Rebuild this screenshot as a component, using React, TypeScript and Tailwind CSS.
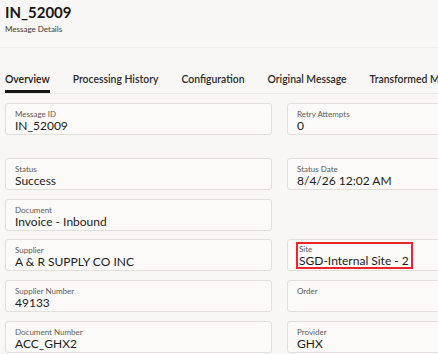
import React from "react";

type Field = { label: string; value?: string; highlight?: boolean };

function Card({ label, value, highlight }: Field) {
  return (
    <div className="h-[32px] rounded-[3px] border border-[#e2dfda] bg-[#fbfaf8] pl-[9px] pt-[5px]">
      <div className={highlight ? "inline-block -ml-[1px] -mt-[3px] border-2 border-[#e8262b] pl-[1px] pr-[2px]" : ""}>
        <div className="text-[8px] leading-[10px] text-[#5e5a55]">{label}</div>
        <div className="text-[12px] leading-[13px] text-[#1e1c1a]">{value ?? "\u00a0"}</div>
      </div>
    </div>
  );
}

const tabs = ["Overview", "Processing History", "Configuration", "Original Message", "Transformed Message"];

export default function App() {
  return (
    <div
      className="w-[438px] h-[354px] overflow-hidden bg-[#f8f7f5]"
      style={{ fontFamily: "Lato, 'Open Sans', sans-serif" }}
    >
      {/* header */}
      <div className="h-[48px] border-b border-[#efede9] px-[5px] pt-[3px]">
        <div className="text-[15px] font-bold leading-[18px] text-[#161513]">IN_52009</div>
        <div className="mt-[3px] text-[8px] leading-[10px] text-[#3a3835]">Message Details</div>
      </div>

      {/* tabs */}
      <div className="mt-[22px] flex h-[24px] gap-[23px] border-b border-[#ebe9e5] pl-[5px] pt-[2px] whitespace-nowrap">
        {tabs.map((t, i) => (
          <div
            key={t}
            className={
              "text-[10.4px] leading-[14px] font-semibold text-[#2b2927] " +
              (i === 0 ? "border-b-[3px] border-[#161513] text-[#161513] font-bold" : "")
            }
          >
            {t}
          </div>
        ))}
      </div>

      {/* fields */}
      <div className="mt-[9px] grid w-[560px] grid-cols-[267px_267px] gap-x-[15px] pl-[5px]">
        <Card label="Message ID" value="IN_52009" />
        <Card label="Retry Attempts" value="0" />
        <div className="col-span-2 h-[23px]" />
        <Card label="Status" value="Success" />
        <Card label="Status Date" value="8/4/26 12:02 AM" />
        <div className="col-span-2 h-[9px]" />
        <Card label="Document" value="Invoice - Inbound" />
        <div />
        <div className="col-span-2 h-[8px]" />
        <Card label="Supplier" value="A & R SUPPLY CO INC" />
        <Card label="Site" value="SGD-Internal Site - 2" highlight />
        <div className="col-span-2 h-[9px]" />
        <Card label="Supplier Number" value="49133" />
        <Card label="Order" />
        <div className="col-span-2 h-[9px]" />
        <Card label="Document Number" value="ACC_GHX2" />
        <Card label="Provider" value="GHX" />
      </div>
    </div>
  );
}
